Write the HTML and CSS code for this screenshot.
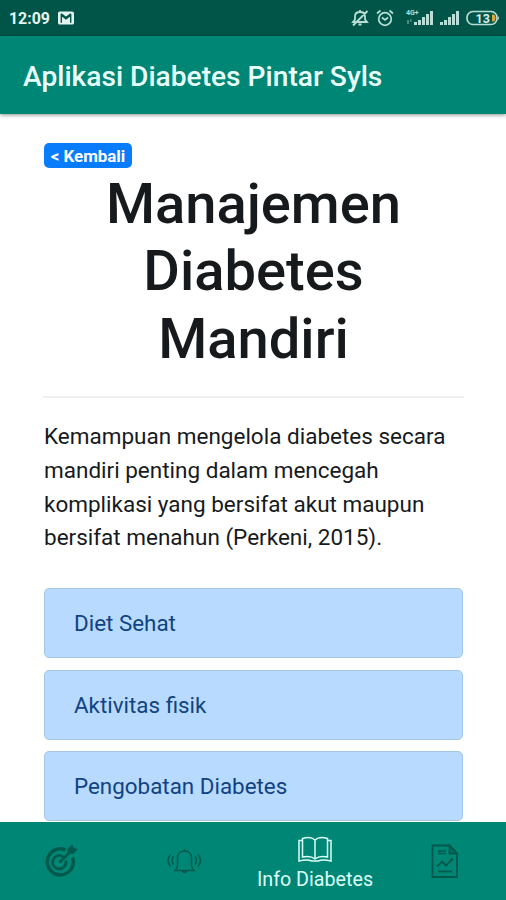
FILE: index.html
```html
<!DOCTYPE html>
<html lang="id">
<head>
    <meta charset="UTF-8">
    <meta name="viewport" content="width=device-width, initial-scale=1.0">
    <title>Aplikasi Diabetes Pintar Syls</title>
    <link rel="stylesheet" href="styles.css">
</head>
<body>
    <div class="status-bar">
        <span class="time">12:09</span>
        <svg class="mail" width="16" height="14" viewBox="0 0 17 14">
            <rect width="17" height="14" rx="2" fill="#e4f5f0"/>
            <path d="M3.5 12V4l5 4 5-4v8M3.5 2.5l5 4 5-4" fill="none" stroke="#005548" stroke-width="1.5"/>
        </svg>
        <div class="status-icons">
            <svg width="18" height="18" viewBox="0 0 18 18" fill="none" stroke="#b9ded5" stroke-width="1.8">
                <path d="M2 13h14L14 10.500V7.500C14 4.500 12 3 9 3S4 4.500 4 7.500v3zM7.500 15.500h3M9 1v2M2 16.500L16.500 2"/>
            </svg>
            <svg class="alarm" width="18" height="18" viewBox="0 0 18 18" fill="none" stroke="#b9ded5" stroke-width="1.7">
                <circle cx="9" cy="10" r="6.300"/>
                <path d="M6 8.500l3 2.500 3-2.500M1 4.500L4.500 1.500M17 4.500L13.500 1.500"/>
            </svg>
            <svg class="signal-4g" width="28" height="18" viewBox="0 0 28 18" fill="#b9ded5">
                <text x="0" y="6" class="network">4G+</text>
                <path d="M1 11h2v4H1zM4 10h1.500v3H4z" opacity=".4"/>
                <path d="M8 13h3v3H8zM12 11h3v5h-3zM16 8h3v8h-3zM20 5h3v11h-3zM24 2h3v14h-3z"/>
            </svg>
            <svg class="signal" width="20" height="18" viewBox="0 0 20 18" fill="#b9ded5">
                <path d="M0 13h3v3H0zM4 11h3v5H4zM8 8h3v8H8zM12 5h3v11h-3zM16 2h3v14h-3z"/>
            </svg>
            <svg class="battery" width="34" height="16" viewBox="0 0 34 16">
                <rect x="1" y="1.500" width="30" height="13" rx="6" fill="none" stroke="#b9ded5" stroke-width="1.700"/>
                <path d="M26 4.500h2q1.500 1 1.500 3.500T28 11.500h-2z" fill="#dfa63a"/>
                <path d="M32 6q2 2 0 4z" fill="#b9ded5"/>
                <text x="9.500" y="12.500" class="charge">13</text>
            </svg>
        </div>
    </div>

    <header class="app-bar">Aplikasi Diabetes Pintar Syls</header>

    <main class="content">
        <a class="badge" href="#">&lt; Kembali</a>
        <h1>Manajemen Diabetes Mandiri</h1>
        <hr>
        <p>Kemampuan mengelola diabetes secara mandiri penting dalam mencegah komplikasi yang bersifat akut maupun bersifat menahun (Perkeni, 2015).</p>
        <div class="menu">
            <a class="alert" href="#">Diet Sehat</a>
            <a class="alert" href="#">Aktivitas fisik</a>
            <a class="alert" href="#">Pengobatan Diabetes</a>
        </div>
    </main>

    <nav class="bottom-nav">
        <a class="nav-item" href="#">
            <svg width="36" height="36" viewBox="0 0 36 36" fill="none" stroke="currentColor">
                <path d="M22.500 7A13 13 0 1 0 29.500 14.500" stroke-width="3.500"/>
                <path d="M20.500 14A6.700 6.700 0 1 0 22.800 17.500" stroke-width="2.700"/>
                <path d="M16.500 19.500L29 7" stroke-width="2.700"/>
                <path d="M25 9.500V6l4-4 1.500 3L34 6.500l-4 4z" fill="currentColor" stroke-width="1"/>
            </svg>
        </a>
        <a class="nav-item" href="#">
            <svg width="36" height="26" viewBox="0 0 36 26" fill="none" stroke="currentColor" stroke-width="1.500">
                <path d="M9 22.500h19c-1.500-1.500-2.500-3-2.500-5V10c0-4.500-3-7-7-7s-7 2.500-7 7v7.500c0 2-1 3.500-2.500 5zM18.500 3V1M16.500 23q2 3 4 0"/>
                <path d="M7.500 8.500q-3 4 0 8M4.500 6.500q-5 6 0 12M29 8.500q3 4 0 8M32 6.500q5 6 0 12"/>
            </svg>
        </a>
        <a class="nav-item active" href="#">
            <svg width="36" height="27" viewBox="0 0 36 27" fill="none" stroke="currentColor" stroke-width="1.500">
                <path d="M18 4C15 1 10 1 5.500 2.500V21c5-1 9-1 12.500 2 3.500-3 7.500-3 12.500-2V2.500C26 1 21 1 18 4zM18 4v19"/>
                <path d="M5.500 4.500H2V25q8-2 13 0h6q5-2 13 0V4.500h-3.500"/>
            </svg>
            <span>Info Diabetes</span>
        </a>
        <a class="nav-item" href="#">
            <svg width="28" height="35" viewBox="0 0 28 35" fill="none" stroke="currentColor" stroke-width="1.800">
                <path d="M1.500 1.500h17l7.500 8v23.500H1.500z"/>
                <path d="M18.500 1.500v8H26z" fill="currentColor" fill-opacity=".5"/>
                <path d="M7 7h8M7 9.500h8" stroke-width="1.500"/>
                <path d="M7 27.500h14"/>
                <path d="M6 22.500l5-5 4 4 6-6"/>
                <circle cx="21" cy="15.500" r="1.500" fill="currentColor" stroke="none"/>
            </svg>
        </a>
    </nav>
</body>
</html>
```
FILE: styles.css
```css
* {
    box-sizing: border-box;
}
body {
    display: flex;
    flex-direction: column;
    height: 900px;
    margin: 0;
    overflow: hidden;
    background-color: #fff;
    color: #171a1d;
    font-family: Roboto, sans-serif;
}
a {
    text-decoration: none;
}
svg {
    display: block;
    flex-shrink: 0;
}
.status-bar {
    display: flex;
    flex-shrink: 0;
    align-items: center;
    height: 36px;
    padding: 0 6px 0 9px;
    background-color: #005548;
    color: #e4f5f0;
}
.time {
    width: 49px;
    font-size: 15.9px;
    font-weight: 700;
}
.status-icons {
    display: flex;
    align-items: center;
    margin-left: auto;
}
.alarm {
    margin-left: 7px;
}
.signal-4g {
    margin-left: 12px;
}
.signal {
    margin-left: 6px;
}
.battery {
    margin-left: 6px;
}
.network {
    font-size: 7px;
    font-weight: 700;
}
.charge {
    fill: #d5eee7;
    font-size: 12.5px;
    font-weight: 700;
}
.app-bar {
    z-index: 1;
    display: flex;
    flex-shrink: 0;
    align-items: center;
    height: 78px;
    padding: 3px 23px 0;
    background-color: #008675;
    color: #e8fffb;
    font-size: 28.15px;
    font-weight: 500;
    white-space: nowrap;
    box-shadow: 0 1px 4px rgba(0, 0, 0, 0.45);
}
.content {
    flex: 1;
    min-height: 0;
    padding: 29px 43px 0 44px;
    overflow: hidden;
}
.badge {
    display: block;
    width: 88px;
    height: 25px;
    border-radius: 5px;
    background-color: #087cfb;
    color: #fff;
    font-size: 16.9px;
    font-weight: 700;
    line-height: 26px;
    text-align: center;
}
h1 {
    margin: 3px 40px 0;
    font-size: 56.1px;
    font-weight: 500;
    line-height: 67.4px;
    text-align: center;
}
hr {
    height: 2px;
    margin: 23px -1px 22px;
    border: 0;
    background-color: #f0f0f0;
}
p {
    margin: 0;
    font-size: 22.5px;
    line-height: 33.7px;
}
.menu {
    display: flex;
    flex-direction: column;
    gap: 11.5px;
    margin-top: 33px;
}
.alert {
    height: 70px;
    padding-left: 29px;
    border: 1px solid #a4c7e8;
    border-radius: 5px;
    background-color: #b8daff;
    color: #104381;
    font-size: 22.4px;
    line-height: 69px;
}
.bottom-nav {
    display: grid;
    grid-template-columns: 122px 124px 138px 122px;
    flex-shrink: 0;
    height: 78px;
    background-color: #008675;
}
.nav-item {
    display: flex;
    flex-direction: column;
    align-items: center;
    justify-content: center;
    color: #00594c;
}
.active {
    gap: 5px;
    padding-top: 4px;
    color: #dcfff8;
    font-size: 19.7px;
    white-space: nowrap;
}
```
